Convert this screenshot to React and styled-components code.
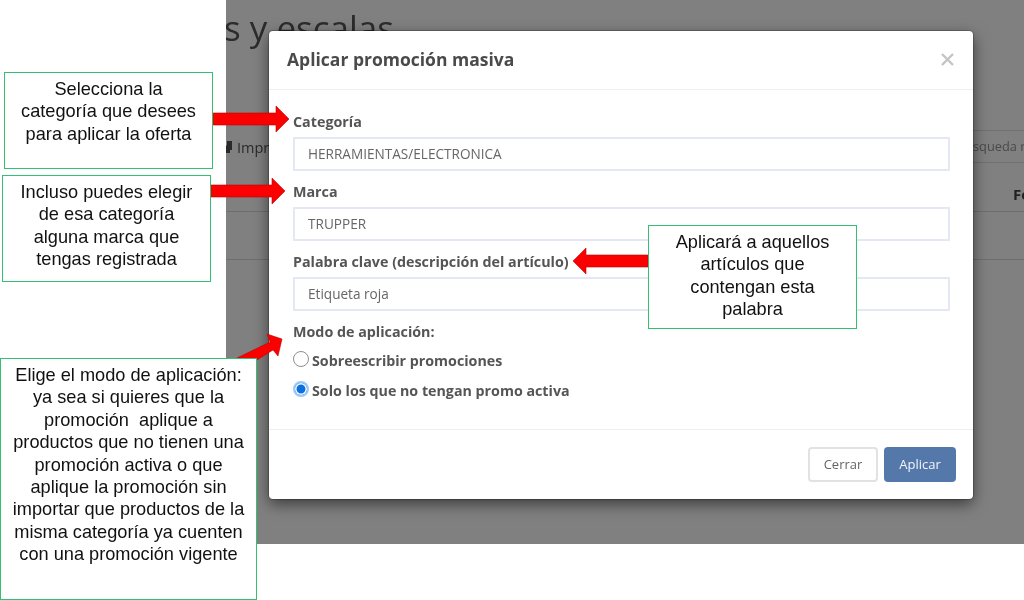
import React from 'react';
import styled, { createGlobalStyle } from 'styled-components';

const GlobalStyle = createGlobalStyle`
  html, body {
    margin: 0;
    padding: 0;
    background: #fff;
  }
`;

const Page = styled.div`
  position: relative;
  width: 1024px;
  height: 600px;
  overflow: hidden;
  background: #fff;
  filter: blur(0.35px);
`;

// the greyed-out app page behind the dialog
const Backdrop = styled.div`
  margin-left: 226px;
  width: 798px;
  height: 544px;
  overflow: hidden;
  background: #808080;
  font-family: 'Open Sans', sans-serif;
  color: #333;
`;
const PageTitle = styled.h1`
  margin: 0 0 0 -2px;
  padding: 5px 0 0 0;
  font-size: 35px;
  line-height: 46px;
  font-weight: 400;
  color: #2c2c2c;
  white-space: nowrap;
`;
const Toolbar = styled.div`
  display: flex;
  justify-content: space-between;
  align-items: flex-end;
  margin-top: 78px;
  height: 34px;
  font-size: 14.5px;
  color: #2a2a2a;
`;
const PrintLabel = styled.span`
  display: flex;
  align-items: center;
  gap: 5px;
  height: 32px;
  margin-top: 1px;
`;
const PrintIcon = styled.svg`
  width: 6px;
  height: 12px;
  fill: #2a2a2a;
`;
const SearchBox = styled.div`
  width: 60px;
  height: 33px;
  line-height: 31px;
  border: 1px solid #6f7078;
  border-right: none;
  box-sizing: border-box;
  white-space: nowrap;
  overflow: hidden;
  color: #4a4a4a;
  font-size: 12.8px;
  padding-left: 8px;
`;
const TableHead = styled.div`
  height: 49px;
  display: flex;
  justify-content: flex-end;
  line-height: 62px;
  border-bottom: 1px solid #6e6e6e;
  box-sizing: border-box;
  font-size: 15px;
  font-weight: 700;
  color: #222;
  overflow: hidden;
`;
const HeadCell = styled.span`
  flex: none;
  width: 11px;
  overflow: hidden;
`;
const TableRow = styled.div`
  height: 48px;
  border-bottom: 1px solid #6e6e6e;
  box-sizing: border-box;
`;

const Modal = styled.div`
  position: absolute;
  left: 269px;
  top: 31px;
  width: 704px;
  height: 468px;
  display: flex;
  flex-direction: column;
  background: #fff;
  border-radius: 4px;
  box-shadow: 0 0 0 1px rgba(0, 0, 0, 0.2), 0 5px 15px rgba(0, 0, 0, 0.55);
  font-family: 'Open Sans', sans-serif;
  color: #555;
`;
const ModalHeader = styled.div`
  height: 59px;
  flex: none;
  display: flex;
  align-items: center;
  justify-content: space-between;
  padding: 0 19px 2px 18px;
  box-sizing: border-box;
  border-bottom: 1px solid #eceef1;
`;
const ModalTitle = styled.h4`
  margin: 0;
  font-size: 17.5px;
  font-weight: 700;
  color: #4a4a4a;
`;
const CloseIcon = styled.svg`
  width: 13px;
  height: 13px;
  display: block;
  stroke: #c4c4c4;
  stroke-width: 2.4;
`;
const ModalBody = styled.div`
  flex: 1;
  padding: 22px 23px 0 24px;
  box-sizing: border-box;
`;
const Field = styled.div`
  margin-bottom: 11px;
  &:last-of-type {
    margin-bottom: 7px;
  }
`;
const FieldLabel = styled.div`
  height: 20px;
  line-height: 20px;
  margin-bottom: 5px;
  font-size: 14.3px;
  font-weight: 700;
  color: #555;
  white-space: nowrap;
`;
const TextBox = styled.div`
  height: 34px;
  line-height: 30px;
  box-sizing: border-box;
  border: 2px solid #e4e8f3;
  padding-left: 13px;
  font-size: 13.6px;
  color: #666;
`;
const RadioGroup = styled.div`
  margin-top: -2px;
`;
const RadioRow = styled.div`
  display: flex;
  align-items: center;
  gap: 3px;
  height: 30px;
  font-size: 14.25px;
  font-weight: 700;
  color: #555;
`;
const RadioDot = styled.span`
  width: 16px;
  height: 16px;
  flex: none;
  margin-top: -3px;
  box-sizing: border-box;
  border-radius: 50%;
  background: ${(p) => (p.$checked ? '#0a6fe0' : '#fff')};
  border: ${(p) => (p.$checked ? '2px solid #9cc8f7' : '1.5px solid #8f8f8f')};
  box-shadow: ${(p) => (p.$checked ? 'inset 0 0 0 1.5px #fff' : 'none')};
`;
const ModalFooter = styled.div`
  height: 70px;
  flex: none;
  display: flex;
  justify-content: flex-end;
  gap: 6px;
  padding: 17px 17px 0 0;
  box-sizing: border-box;
  border-top: 1px solid #eceef1;
`;
const Button = styled.div`
  width: ${(p) => (p.$primary ? '72px' : '70px')};
  height: 35px;
  line-height: ${(p) => (p.$primary ? '35px' : '31px')};
  box-sizing: border-box;
  border-radius: 4px;
  text-align: center;
  font-size: 13px;
  color: ${(p) => (p.$primary ? '#f2f5fa' : '#666')};
  background: ${(p) => (p.$primary ? '#5578ab' : '#fff')};
  border: ${(p) => (p.$primary ? 'none' : '2px solid #e2e2e2')};
`;

const Arrows = styled.svg`
  position: absolute;
  left: 0;
  top: 0;
  width: 1024px;
  height: 600px;
`;
const Callout = styled.div`
  position: absolute;
  left: ${(p) => p.$x}px;
  top: ${(p) => p.$y}px;
  width: ${(p) => p.$w}px;
  height: ${(p) => p.$h}px;
  padding-top: 5px;
  box-sizing: border-box;
  border: 1px solid #33c072;
  background: #fff;
  font-family: 'Liberation Sans', Arial, sans-serif;
  font-size: 18.2px;
  line-height: 22.4px;
  text-align: center;
  color: #111;
  white-space: pre;
`;

const App = () => {
  return (
    <Page>
      <GlobalStyle />
      <Backdrop>
        <PageTitle>s y escalas</PageTitle>
        <Toolbar>
          <PrintLabel>
            <PrintIcon viewBox="0 0 6 12">
              <path d="M1 0 H6 V4 H6 V9 H4 V12 H0 V5 L1 4 Z" />
            </PrintIcon>
            Impri
          </PrintLabel>
          <SearchBox>squeda r</SearchBox>
        </Toolbar>
        <TableHead>
          <HeadCell>Fe</HeadCell>
        </TableHead>
        <TableRow />
      </Backdrop>
      <Modal>
        <ModalHeader>
          <ModalTitle>Aplicar promoción masiva</ModalTitle>
          <CloseIcon viewBox="0 0 13 13">
            <path d="M1 1 L12 12 M12 1 L1 12" />
          </CloseIcon>
        </ModalHeader>
        <ModalBody>
          <Field>
            <FieldLabel>Categoría</FieldLabel>
            <TextBox>HERRAMIENTAS/ELECTRONICA</TextBox>
          </Field>
          <Field>
            <FieldLabel>Marca</FieldLabel>
            <TextBox>TRUPPER</TextBox>
          </Field>
          <Field>
            <FieldLabel>Palabra clave (descripción del artículo)</FieldLabel>
            <TextBox>Etiqueta roja</TextBox>
          </Field>
          <FieldLabel>Modo de aplicación:</FieldLabel>
          <RadioGroup>
            <RadioRow>
              <RadioDot />
              Sobreescribir promociones
            </RadioRow>
            <RadioRow>
              <RadioDot $checked />
              Solo los que no tengan promo activa
            </RadioRow>
          </RadioGroup>
        </ModalBody>
        <ModalFooter>
          <Button>Cerrar</Button>
          <Button $primary>Aplicar</Button>
        </ModalFooter>
      </Modal>
      <Arrows viewBox="0 0 1024 600">
        <g fill="#fb0000" stroke="#c40000" strokeWidth="0.6">
          <path d="M212 113 H276 V106 L289 119 L276 132 V125 H212 Z" />
          <path d="M207 185 H272 V178 L285 191 L272 204 V197 H207 Z" />
          <path d="M648 255 H586 V248 L573 261 L586 274 V267 H648 Z" />
          <path d="M237 358 L270 342 L267 334 L282 339 L278 356 L273 350 L257 360 Z" />
        </g>
      </Arrows>
      <Callout $x={4} $y={72} $w={209} $h={97}>
        {'Selecciona la\ncategoría que desees\npara aplicar la oferta'}
      </Callout>
      <Callout $x={2} $y={175} $w={209} $h={107}>
        {'Incluso puedes elegir\nde esa categoría\nalguna marca que\ntengas registrada'}
      </Callout>
      <Callout $x={648} $y={225} $w={209} $h={104}>
        {'Aplicará a aquellos\nartículos que\ncontengan esta\npalabra'}
      </Callout>
      <Callout $x={0} $y={358} $w={257} $h={242}>
        {'Elige el modo de aplicación:\nya sea si quieres que la\npromoción  aplique a\nproductos que no tienen una\npromoción activa o que\naplique la promoción sin\nimportar que productos de la\nmisma categoría ya cuenten\ncon una promoción vigente'}
      </Callout>
    </Page>
  );
};

export default App;
